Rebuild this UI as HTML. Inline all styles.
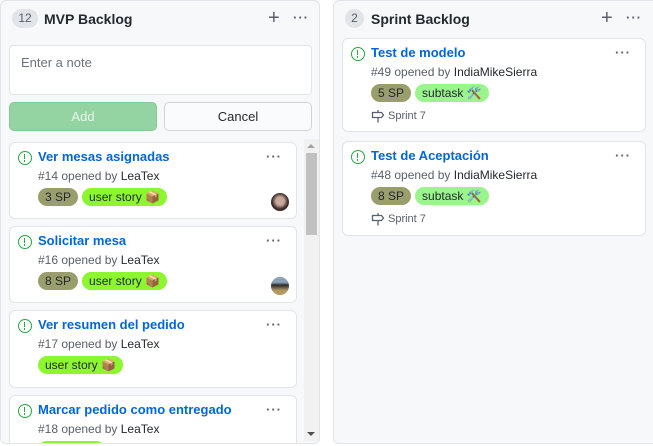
<!DOCTYPE html>
<html><head><meta charset="utf-8"><style>
*{box-sizing:border-box;margin:0;padding:0}
html,body{width:653px;height:446px;overflow:hidden}
body{background:#fff;font-family:"Liberation Sans",sans-serif;position:relative;color:#24292e}
.col{position:absolute;top:0;background:#f6f8fa;border:1px solid #e1e4e8;border-radius:6px;height:444px;overflow:hidden}
.badge{position:absolute;top:8px;height:19px;border-radius:10px;background:#e1e4e8;color:#586069;font-size:12px;line-height:19px;text-align:center}
.title{position:absolute;top:10px;font-size:14px;font-weight:bold;color:#24292e}
.plus{position:absolute;top:6px;font-size:20px;color:#586069;font-weight:300}
.dots{position:absolute;font-size:13px;color:#586069;letter-spacing:1px;font-weight:bold}
.card{position:absolute;background:#fff;border:1px solid #e1e4e8;border-radius:6px}
.ic{position:absolute;left:8px;top:8px;width:14px;height:14px;border:1.6px solid #28a745;border-radius:50%}
.ic:after{content:"";position:absolute;left:4.6px;top:2px;width:1.6px;height:5px;background:#28a745}
.ic:before{content:"";position:absolute;left:4.6px;top:8px;width:1.6px;height:1.6px;background:#28a745}
.ct{position:absolute;left:28px;top:6px;font-size:13px;font-weight:bold;color:#0366d6}
.meta{position:absolute;left:28px;top:26px;font-size:12px;color:#586069}
.meta b{font-weight:normal;color:#24292e}
.lbls{position:absolute;left:28px;top:45px;display:flex;gap:4px}
.lbl{height:18px;border-radius:9px;font-size:12px;line-height:18px;padding:0 7px;color:#24292e;white-space:nowrap}
.sp{background:#9a9e6c}
.us{background:#8cf72e}
.st{background:#9af58c}
.spr{position:absolute;left:28px;top:70px;font-size:11px;color:#586069;display:flex;align-items:center;gap:3px}
.av{position:absolute;width:18px;height:18px;border-radius:50%}
</style></head><body>
<div class="col" style="left:0;width:320px">
 <div class="badge" style="left:11px;width:26px">12</div>
 <div class="title" style="left:43px">MVP Backlog</div>
 <div class="plus" style="left:267px">+</div>
 <div class="dots" style="left:292px;top:9px">···</div>
 <div style="position:absolute;left:8px;top:44px;width:303px;height:50px;background:#fff;border:1px solid #e1e4e8;border-radius:4px;font-size:13px;color:#6a737d;padding:9px 11px">Enter a note</div>
 <div style="position:absolute;left:8px;top:101px;width:148px;height:29px;background:#94d3a2;border:1px solid #86c895;border-radius:5px;color:#e8f5ea;font-size:13px;text-align:center;line-height:27px">Add</div>
 <div style="position:absolute;left:163px;top:101px;width:148px;height:29px;background:#fafbfc;border:1px solid #d1d5da;border-radius:5px;font-size:13px;text-align:center;line-height:27px">Cancel</div>
 <div style="position:absolute;left:303px;top:138px;width:15px;height:302px;background:#f1f1f1"></div>
 <div style="position:absolute;left:305px;top:152px;width:11px;height:82px;background:#c1c1c1"></div>
 <div style="position:absolute;left:306px;top:143px;width:0;height:0;border-left:4px solid transparent;border-right:4px solid transparent;border-bottom:4px solid #a3a3a3"></div>
 <div style="position:absolute;left:306px;top:431px;width:0;height:0;border-left:4px solid transparent;border-right:4px solid transparent;border-top:4px solid #505050"></div>

 <div class="card" style="left:8px;top:141px;width:288px;height:77px"><div class="ic"></div><div class="ct">Ver mesas asignadas</div><div class="dots" style="left:256px;top:6px">···</div><div class="meta">#14 opened by <b>LeaTex</b></div><div class="lbls"><div class="lbl sp">3 SP</div><div class="lbl us">user story 📦</div></div><div class="av" style="left:261px;top:50px;background:radial-gradient(circle at 50% 45%,#c9a89a 30%,#3a2a2a 60%)"></div></div>
 <div class="card" style="left:8px;top:225px;width:288px;height:77px"><div class="ic"></div><div class="ct">Solicitar mesa</div><div class="dots" style="left:256px;top:6px">···</div><div class="meta">#16 opened by <b>LeaTex</b></div><div class="lbls"><div class="lbl sp">8 SP</div><div class="lbl us">user story 📦</div></div><div class="av" style="left:261px;top:50px;background:linear-gradient(#8aa0b5 30%,#2b2b2b 45%,#b59a60 75%)"></div></div>
 <div class="card" style="left:8px;top:309px;width:288px;height:78px"><div class="ic"></div><div class="ct">Ver resumen del pedido</div><div class="dots" style="left:256px;top:6px">···</div><div class="meta">#17 opened by <b>LeaTex</b></div><div class="lbls"><div class="lbl us">user story 📦</div></div></div>
 <div class="card" style="left:8px;top:394px;width:288px;height:60px"><div class="ic"></div><div class="ct">Marcar pedido como entregado</div><div class="dots" style="left:256px;top:6px">···</div><div class="meta">#18 opened by <b>LeaTex</b></div><div class="lbls"><div class="lbl us">user story</div></div></div>
</div>
<div class="col" style="left:333px;width:330px">
 <div class="badge" style="left:11px;width:19px">2</div>
 <div class="title" style="left:37px">Sprint Backlog</div>
 <div class="plus" style="left:267px">+</div>
 <div class="dots" style="left:292px;top:9px">···</div>
 <div class="card" style="left:8px;top:37px;width:304px;height:94px"><div class="ic"></div><div class="ct">Test de modelo</div><div class="dots" style="left:272px;top:6px">···</div><div class="meta">#49 opened by <b>IndiaMikeSierra</b></div><div class="lbls"><div class="lbl sp">5 SP</div><div class="lbl st">subtask 🛠️</div></div><div class="spr"><svg width="14" height="14" viewBox="0 0 14 14" fill="none" stroke="#586069" stroke-width="1.3"><path d="M7 1v2M1.5 3.5h9l2 2.5-2 2.5h-9zM7 8.5v5"/></svg>Sprint 7</div></div>
 <div class="card" style="left:8px;top:140px;width:304px;height:95px"><div class="ic"></div><div class="ct">Test de Aceptación</div><div class="dots" style="left:272px;top:6px">···</div><div class="meta">#48 opened by <b>IndiaMikeSierra</b></div><div class="lbls"><div class="lbl sp">8 SP</div><div class="lbl st">subtask 🛠️</div></div><div class="spr"><svg width="14" height="14" viewBox="0 0 14 14" fill="none" stroke="#586069" stroke-width="1.3"><path d="M7 1v2M1.5 3.5h9l2 2.5-2 2.5h-9zM7 8.5v5"/></svg>Sprint 7</div></div>
</div>
</body></html>
